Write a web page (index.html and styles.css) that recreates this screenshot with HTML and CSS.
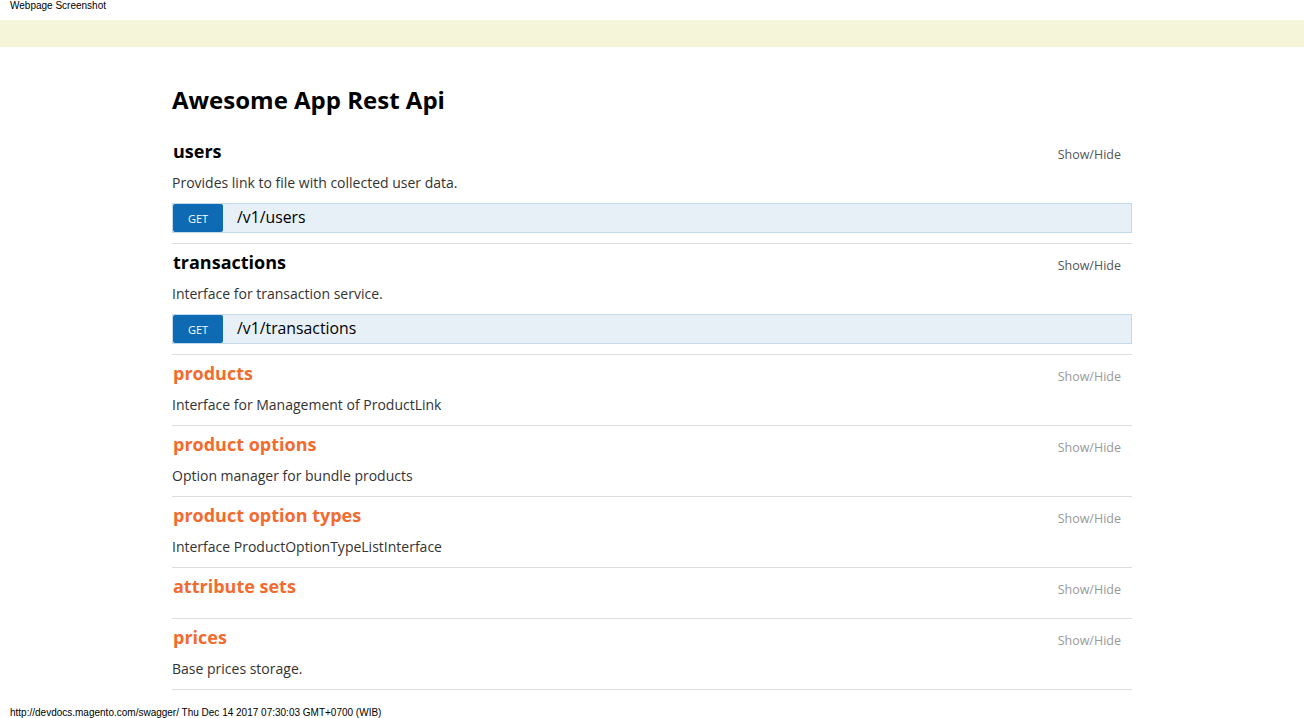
FILE: index.html
```html
<!DOCTYPE html>
<html>
<head>
<meta charset="utf-8">
<link rel="stylesheet" href="styles.css">
<title>Awesome App Rest Api</title>
</head>
<body>
<div class="caption">Webpage Screenshot</div>
<div class="topbar"></div>
<main class="container">
  <h1 class="title">Awesome App Rest Api</h1>

  <section class="resource">
    <div class="res-head">
      <h2 class="res-name">users</h2>
      <a class="toggle">Show/Hide</a>
    </div>
    <p class="res-desc">Provides link to file with collected user data.</p>
    <div class="op">
      <span class="method">GET</span>
      <span class="path">/v1/users</span>
    </div>
  </section>

  <section class="resource">
    <div class="res-head">
      <h2 class="res-name">transactions</h2>
      <a class="toggle">Show/Hide</a>
    </div>
    <p class="res-desc">Interface for transaction service.</p>
    <div class="op">
      <span class="method">GET</span>
      <span class="path">/v1/transactions</span>
    </div>
  </section>

  <section class="resource off">
    <div class="res-head">
      <h2 class="res-name">products</h2>
      <a class="toggle">Show/Hide</a>
    </div>
    <p class="res-desc">Interface for Management of ProductLink</p>
  </section>

  <section class="resource off">
    <div class="res-head">
      <h2 class="res-name">product options</h2>
      <a class="toggle">Show/Hide</a>
    </div>
    <p class="res-desc">Option manager for bundle products</p>
  </section>

  <section class="resource off">
    <div class="res-head">
      <h2 class="res-name">product option types</h2>
      <a class="toggle">Show/Hide</a>
    </div>
    <p class="res-desc">Interface ProductOptionTypeListInterface</p>
  </section>

  <section class="resource off">
    <div class="res-head">
      <h2 class="res-name">attribute sets</h2>
      <a class="toggle">Show/Hide</a>
    </div>
    <p class="res-desc empty"></p>
  </section>

  <section class="resource off">
    <div class="res-head">
      <h2 class="res-name">prices</h2>
      <a class="toggle">Show/Hide</a>
    </div>
    <p class="res-desc">Base prices storage.</p>
  </section>
</main>
<div class="footer">http://devdocs.magento.com/swagger/ Thu Dec 14 2017 07:30:03 GMT+0700 (WIB)</div>
</body>
</html>
```

FILE: styles.css
```css
html, body {
  margin: 0;
  padding: 0;
  background: #fff;
}

body {
  font-family: "Open Sans", "Noto Sans", sans-serif;
  color: #333;
}

.caption {
  font-family: "Liberation Sans", Arial, sans-serif;
  font-size: 10px;
  line-height: 11px;
  color: #000;
  padding-left: 10px;
  height: 11px;
}

.topbar {
  margin-top: 9px;
  height: 27px;
  background: #f5f5da;
}

.container {
  width: 960px;
  margin: 0 auto;
}

.title {
  margin: 35px 0 15px 0;
  font-size: 24px;
  line-height: 36px;
  font-weight: 700;
  color: #000;
}

.resource {
  display: flex;
  flex-direction: column;
  padding-top: 6px;
  border-bottom: 1px solid #ddd;
}

.res-head {
  display: flex;
  justify-content: space-between;
  align-items: flex-start;
  height: 24px;
  padding-left: 1px;
}

.res-name {
  margin: 0;
  font-size: 18px;
  line-height: 24px;
  font-weight: 700;
  color: #000;
}

.off .res-name {
  color: #f26b2f;
}

.toggle {
  margin-top: 7px;
  font-size: 12.5px;
  line-height: 17px;
  color: #555;
  padding-right: 11px;
  cursor: pointer;
}

.off .toggle {
  color: #999;
}

.res-desc {
  margin: 10px 0 10px 0;
  font-size: 14px;
  line-height: 20px;
  color: #333;
}

.res-desc.empty {
  height: 0;
}

.op {
  display: flex;
  align-items: center;
  height: 28px;
  border: 1px solid #c3d9ec;
  background: #e7f0f7;
  margin-bottom: 10px;
}

.method {
  display: flex;
  align-items: center;
  justify-content: center;
  width: 50px;
  height: 28px;
  background: #0f6ab4;
  color: #fff;
  font-size: 11px;
  border-radius: 2px;
}

.path {
  margin-left: 14px;
  margin-bottom: 2px;
  font-size: 15.8px;
  color: #000;
}

.footer {
  margin-top: 16px;
  padding-left: 10px;
  font-family: "Liberation Sans", Arial, sans-serif;
  font-size: 10px;
  line-height: 13px;
  color: #000;
}
```
